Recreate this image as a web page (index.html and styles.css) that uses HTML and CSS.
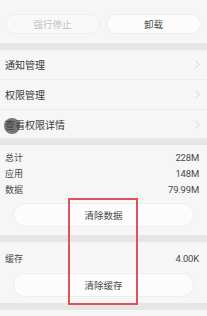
FILE: index.html
```html
<!DOCTYPE html>
<html lang="zh">
<head>
<meta charset="utf-8">
<link rel="stylesheet" href="styles.css">
</head>
<body>
<div class="page">
  <div class="top">
    <div class="pill disabled">强行停止</div>
    <div class="pill">卸载</div>
  </div>
  <div class="band"></div>
  <div class="row"><span>通知管理</span><svg class="chev" viewBox="0 0 5 9" width="5" height="9"><polyline points="0.6,0.6 4.2,4.5 0.6,8.4" fill="none" stroke="#cdcdcd" stroke-width="0.8"/></svg></div>
  <div class="row"><span>权限管理</span><svg class="chev" viewBox="0 0 5 9" width="5" height="9"><polyline points="0.6,0.6 4.2,4.5 0.6,8.4" fill="none" stroke="#cdcdcd" stroke-width="0.8"/></svg></div>
  <div class="row last"><span>查看权限详情</span><svg class="chev" viewBox="0 0 5 9" width="5" height="9"><polyline points="0.6,0.6 4.2,4.5 0.6,8.4" fill="none" stroke="#cdcdcd" stroke-width="0.8"/></svg></div>
  <div class="band"></div>
  <div class="storage">
    <div class="kv"><span class="k">总计</span><span class="v">228M</span></div>
    <div class="kv"><span class="k">应用</span><span class="v">148M</span></div>
    <div class="kv"><span class="k">数据</span><span class="v">79.99M</span></div>
    <div class="wide">清除数据</div>
  </div>
  <div class="band"></div>
  <div class="storage cache">
    <div class="kv"><span class="k">缓存</span><span class="v">4.00K</span></div>
    <div class="wide">清除缓存</div>
  </div>
  <div class="band"></div>
  <div class="touch"></div>
  <div class="mark"></div>
</div>
</body>
</html>
```

FILE: styles.css
```css
html, body {
  margin: 0;
  padding: 0;
  background: #f6f6f6;
}
.page {
  position: relative;
  width: 207px;
  height: 316px;
  overflow: hidden;
  font-family: "Noto Sans CJK SC", "Noto Sans", sans-serif;
  color: #3a3a3a;
}
.top {
  display: flex;
  gap: 6px;
  padding: 14px 6px 9px 5px;
}
.pill {
  flex: 1;
  height: 20px;
  box-sizing: border-box;
  border: 1px solid #eeeeee;
  border-radius: 10px;
  background: #fcfcfc;
  display: flex;
  align-items: center;
  justify-content: center;
  font-size: 9.5px;
  color: #4a4a4a;
}
.pill.disabled {
  color: #c0c0c0;
  background: #f9f9f9;
}
.band {
  height: 7px;
  background: #e6e6e6;
}
.row {
  height: 29px;
  border-bottom: 1px solid #ebebeb;
  display: flex;
  align-items: center;
  justify-content: space-between;
  padding: 0 7px 0 5px;
  font-size: 10px;
  color: #3a3a3a;
}
.row.last {
  height: 28px;
  border-bottom: none;
}
.storage {
  padding: 4px 8px 8px 5px;
}
.storage.cache {
  padding-top: 8px;
  padding-bottom: 6px;
}
.kv {
  height: 16px;
  display: flex;
  align-items: center;
  justify-content: space-between;
}
.k {
  font-size: 9px;
  color: #4a4a4a;
}
.v {
  font-family: "Roboto", "Liberation Sans", sans-serif;
  font-size: 9.5px;
  color: #4a4a4a;
  letter-spacing: -0.2px;
}
.wide {
  margin: 6px 5px 0 8px;
  height: 24px;
  box-sizing: border-box;
  border: 1px solid #eeeeee;
  border-radius: 12px;
  background: #fcfcfc;
  display: flex;
  align-items: center;
  justify-content: center;
  font-size: 9.5px;
  color: #4a4a4a;
}
.cache .wide {
  margin-top: 7px;
}
.touch {
  position: absolute;
  left: 4px;
  top: 118px;
  width: 16px;
  height: 16px;
  border-radius: 50%;
  background: rgba(70, 70, 70, 0.72);
}
.mark {
  position: absolute;
  left: 68px;
  top: 198px;
  width: 70px;
  height: 107px;
  box-sizing: border-box;
  border: 2px solid #e0525a;
}
```
